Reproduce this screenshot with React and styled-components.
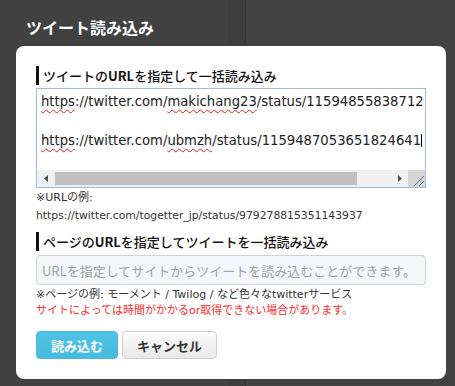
import styled, { createGlobalStyle } from "styled-components"

const GlobalStyle = createGlobalStyle`
    html, body {
        margin: 0;
        padding: 0;
    }
    body {
        background: linear-gradient(to right, #414141 0 228px, #3e3e3e 228px 245px, #353535 245px 246px, #424242 246px);
        font-family: "DejaVu Sans", "Noto Sans CJK JP", sans-serif;
    }
`

const Page = styled.div`
    width: 455px;
    height: 386px;
    padding: 0 9px 0 16px;
    box-sizing: border-box;
`

const Title = styled.h1`
    margin: 0;
    height: 46px;
    padding: 16px 0 0 10px;
    box-sizing: border-box;
    font: bold 16px/22px "Noto Sans CJK JP", sans-serif;
    color: #fff;
`

const Card = styled.div`
    width: 430px;
    height: 333px;
    background: #fff;
    border-radius: 8px;
    padding: 20px;
    box-sizing: border-box;
    display: flex;
    flex-direction: column;
`

const Heading = styled.h2`
    margin: ${props => props.$top || 0}px 0 0 0;
    height: 19px;
    border-left: 3px solid #111;
    padding-left: 4px;
    font: 500 13px/19px "Noto Sans CJK JP", sans-serif;
    color: #111;

    b {
        font-weight: bold;
    }
`

const Editor = styled.div`
    margin-top: 3px;
    width: 390px;
    height: 101px;
    border: 1px solid #9bbcf0;
    box-sizing: border-box;
    display: flex;
    flex-direction: column;
`

const EditorText = styled.div`
    flex: 1;
    overflow: hidden;
    white-space: pre;
    padding: 3px 0 0 4px;
    font-size: 13.2px;
    line-height: 19.5px;
    font-family: "DejaVu Sans", sans-serif;
    color: #222;
`

const Typo = styled.span`
    text-decoration: underline wavy #e02020;
    text-decoration-thickness: 1px;
    text-underline-offset: 3px;
`

const Caret = styled.span`
    display: inline-block;
    width: 1px;
    height: 13px;
    background: #000;
    vertical-align: -2px;
`

const ScrollBar = styled.div`
    height: 17px;
    display: flex;
    background: #f0f0f0;
`

const ScrollButton = styled.div`
    width: 17px;
    display: flex;
    align-items: center;
    justify-content: center;
`

const Track = styled.div`
    flex: 1;
    padding: 2px 0 2px 1px;
`

const Thumb = styled.div`
    height: 100%;
    background: #c1c1c1;
`

const Corner = styled.div`
    width: 17px;
    background-color: #f0f0f0;
    background-image: radial-gradient(#d6d6d6 0.8px, transparent 0.9px);
    background-size: 2px 2px;
    display: flex;
    align-items: flex-end;
    justify-content: flex-end;
`

const Example = styled.div`
    margin-top: ${props => props.$top || 0}px;
    font-size: ${props => props.$size || 11}px;
    line-height: 18px;
    color: #333;
`

const UrlInput = styled.input`
    margin: 4px 0 0 0;
    width: 390px;
    height: 30px;
    box-sizing: border-box;
    border: 1px solid #cfd2d6;
    border-radius: 4px;
    background: #f4f6f9;
    padding: 0 5px;
    font: 13px "Noto Sans CJK JP", sans-serif;
    outline: none;

    &::placeholder {
        color: #a3a3a3;
    }
`

const Note = styled.div`
    font-size: 11px;
    line-height: 16px;
    color: ${props => props.$warn ? '#ff2b2b' : '#333'};
    margin-top: ${props => props.$top || 0}px;
`

const Buttons = styled.div`
    margin-top: 12px;
    display: flex;
    gap: 4px;
`

const Button = styled.button`
    height: 28px;
    width: ${props => props.$primary ? 82 : 95}px;
    border-radius: 4px;
    border: 1px solid ${props => props.$primary ? '#46b8dc' : '#d0d0d0'};
    background: ${props => props.$primary
        ? 'linear-gradient(#52c3e6, #46badf)'
        : 'linear-gradient(#fbfbfb, #e9e9e9)'};
    color: ${props => props.$primary ? '#fff' : '#333'};
    font: bold 13px "Noto Sans CJK JP", sans-serif;
    padding: 0;
    cursor: pointer;
`

function Arrow({ dir }) {
    const d = dir === 'left' ? 'M4 0 L0 3.5 L4 7 Z' : 'M0 0 L4 3.5 L0 7 Z'
    return (
        <svg width="4" height="7" viewBox="0 0 4 7">
            <path d={d} fill="#505050" />
        </svg>
    )
}

export default function App() {
    return (
        <Page>
            <GlobalStyle />
            <Title>ツイート読み込み</Title>
            <Card>
                <Heading>ツイートの<b>URL</b>を指定して一括読み込み</Heading>
                <Editor>
                    <EditorText>
                        <Typo>https</Typo>://twitter.com/<Typo>makichang23</Typo>/status/11594855838712{'\n'}
                        {'\n'}
                        <Typo>https</Typo>://twitter.com/<Typo>ubmzh</Typo>/status/1159487053651824641<Caret />
                    </EditorText>
                    <ScrollBar>
                        <ScrollButton><Arrow dir="left" /></ScrollButton>
                        <Track>
                            <Thumb style={{ width: 302 }} />
                        </Track>
                        <ScrollButton><Arrow dir="right" /></ScrollButton>
                        <Corner>
                            <svg width="17" height="17" viewBox="0 0 17 17">
                                <path d="M6 16 L16 6 M11 16 L16 11" stroke="#707070" strokeWidth="1" />
                            </svg>
                        </Corner>
                    </ScrollBar>
                </Editor>
                <Example $top={1}>※URLの例:</Example>
                <Example $size={10.8}>https://twitter.com/togetter_jp/status/979278815351143937</Example>
                <Heading $top={7}>ページの<b>URL</b>を指定してツイートを一括読み込み</Heading>
                <UrlInput placeholder="URLを指定してサイトからツイートを読み込むことができます。" />
                <Note $top={2}>※ページの例: モーメント / Twilog / など色々なtwitterサービス</Note>
                <Note $warn>サイトによっては時間がかかるor取得できない場合があります。</Note>
                <Buttons>
                    <Button $primary>読み込む</Button>
                    <Button>キャンセル</Button>
                </Buttons>
            </Card>
        </Page>
    )
}
